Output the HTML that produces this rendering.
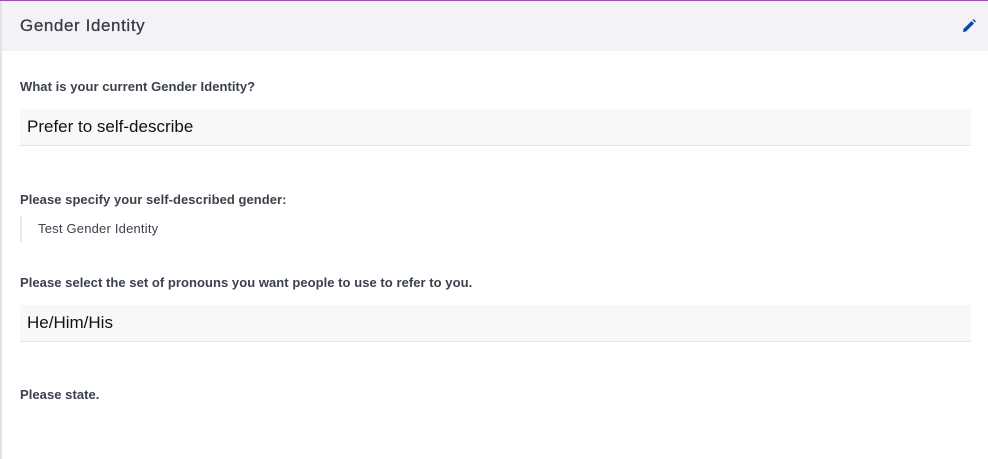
<!DOCTYPE html>
<html><head><style>
body{margin:0;width:988px;height:459px;background:#fff;font-family:"Liberation Sans",sans-serif;overflow:hidden;position:relative}
.top{position:absolute;left:0;top:0;width:988px;height:1px;background:#9b4fb0}
.lb{position:absolute;left:0;top:1px;width:2px;height:458px;background:#e3e3e3}
.hd{position:absolute;left:2px;top:1px;width:986px;height:50px;background:#f4f2f6}
.t{position:absolute;color:#323a45}
.lab{position:absolute;left:20px;font-size:13px;font-weight:bold;color:#3b424c;letter-spacing:0.05px}
.f{position:absolute;left:20px;width:951px;height:36px;background:#f8f8f8;border-bottom:1px solid #e4e4e4;font-size:17px;color:#111;line-height:36px;text-indent:7px}
</style></head><body>
<div class="top"></div><div class="lb"></div><div class="hd"></div>
<div class="t" style="left:20px;top:16px;font-size:17px;letter-spacing:0.6px;-webkit-text-stroke:0.25px #323a45">Gender Identity</div>
<svg style="position:absolute;left:962px;top:19px" width="14" height="14" viewBox="0 0 14 14"><path d="M1 13 L1.5 10 L9.5 2 L12 4.5 L4 12.5 Z" fill="#0a4aa0"/><path d="M10.5 1 L11.5 0 L14 2.5 L13 3.5 Z" fill="#0a4aa0"/></svg>
<div class="lab" style="top:79px">What is your current Gender Identity?</div>
<div class="f" style="top:109px">Prefer to self-describe</div>
<div class="lab" style="top:192px">Please specify your self-described gender:</div>
<div style="position:absolute;left:20px;top:216px;width:2px;height:26px;background:#e8e8e8"></div>
<div style="position:absolute;left:38px;top:221px;font-size:13px;color:#3b424c;letter-spacing:0.2px">Test Gender Identity</div>
<div class="lab" style="top:275px">Please select the set of pronouns you want people to use to refer to you.</div>
<div class="f" style="top:305px">He/Him/His</div>
<div class="lab" style="top:387px">Please state.</div>
</body></html>
